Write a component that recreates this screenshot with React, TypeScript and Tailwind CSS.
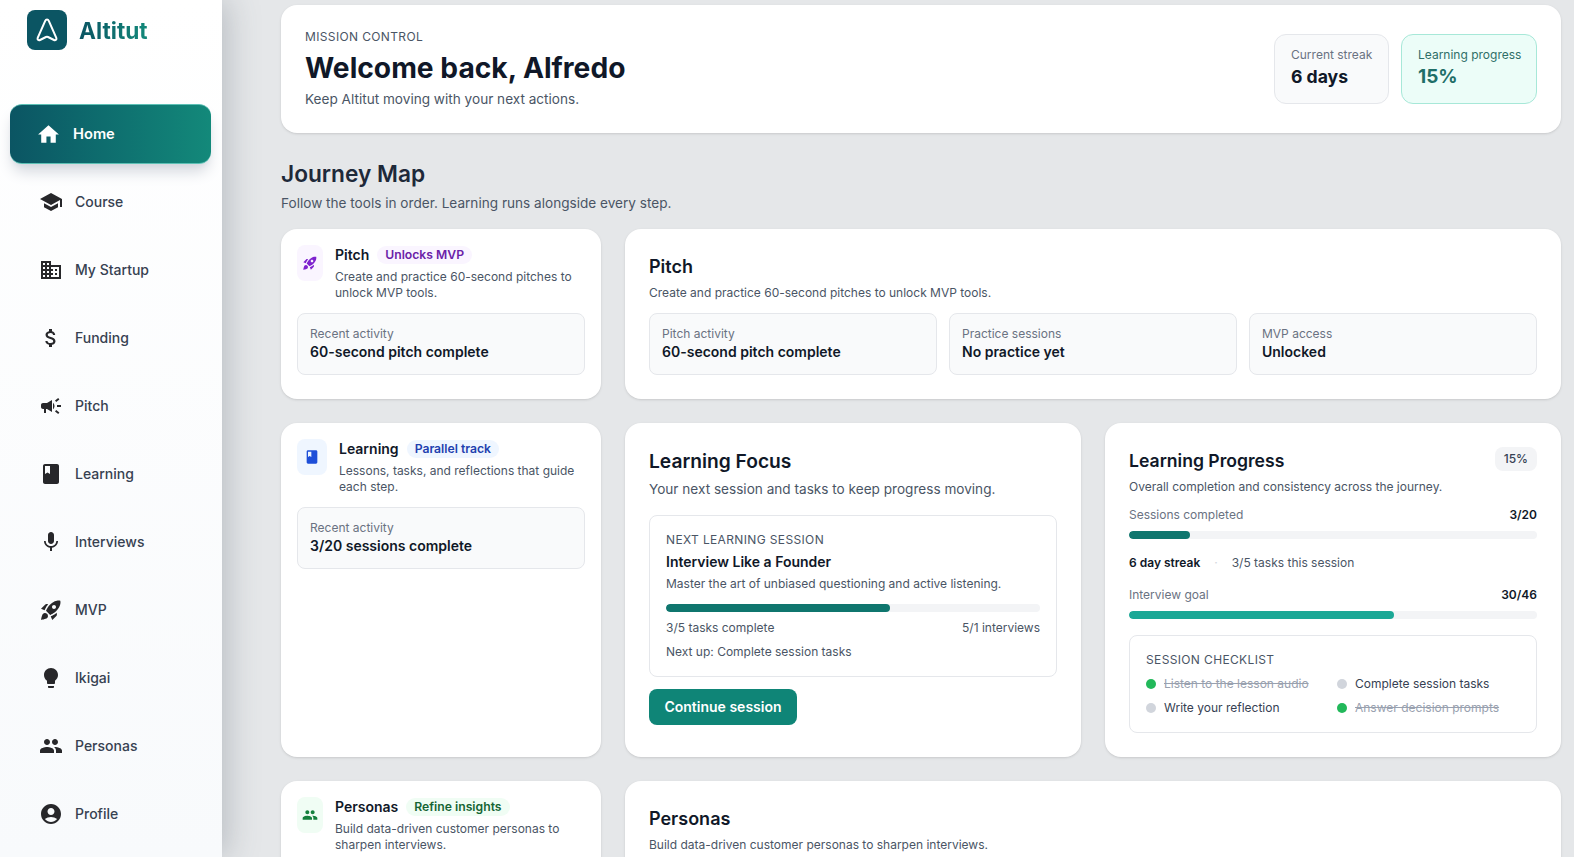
import React from 'react';
import {
  MdHome,
  MdSchool,
  MdDomain,
  MdAttachMoney,
  MdCampaign,
  MdBook,
  MdMic,
  MdRocketLaunch,
  MdLightbulb,
  MdPeople,
  MdAccountCircle,
} from 'react-icons/md';

const NAV_ITEMS = [
  { label: 'Course', icon: MdSchool },
  { label: 'My Startup', icon: MdDomain },
  { label: 'Funding', icon: MdAttachMoney },
  { label: 'Pitch', icon: MdCampaign },
  { label: 'Learning', icon: MdBook },
  { label: 'Interviews', icon: MdMic },
  { label: 'MVP', icon: MdRocketLaunch },
  { label: 'Ikigai', icon: MdLightbulb },
  { label: 'Personas', icon: MdPeople },
  { label: 'Profile', icon: MdAccountCircle },
];

const Sidebar: React.FC = () => (
  <aside className="relative z-10 w-[222px] shrink-0 h-full bg-linear-to-b from-white to-[#f8fafc] shadow-[6px_0_30px_rgba(75,85,99,0.28)] px-[10px] pt-[10px]">
    <div className="flex items-center gap-3 pl-[17px] h-10">
      <div className="w-10 h-10 rounded-lg bg-[#0b5563] flex items-center justify-center">
        <svg width="24" height="26" viewBox="0 0 24 26" fill="none" stroke="white" strokeWidth="2" strokeLinejoin="round">
          <path d="M12 2.5C12.8 2.5 13.4 3 13.8 3.9L21.3 20.8C22 22.4 20.5 23.8 19 23L13 20C12.3 19.7 11.7 19.7 11 20L5 23C3.5 23.8 2 22.4 2.7 20.8L10.2 3.9C10.6 3 11.2 2.5 12 2.5Z" />
        </svg>
      </div>
      <span className="pt-[3px] text-[22.7px] font-bold bg-linear-to-r from-[#0b5563] to-[#13897a] bg-clip-text text-transparent">Altitut</span>
    </div>
    <nav className="mt-[50px]">
      <div className="h-[68px] flex items-center">
        <div className="w-[201px] h-[60px] rounded-xl bg-linear-to-r from-[#0b5563] to-[#13897a] border-y border-[#5cc0b5] shadow-lg shadow-gray-300 flex items-center gap-3 pl-[26px] text-white">
          <MdHome size={25} />
          <span className="text-[14.7px] font-semibold">Home</span>
        </div>
      </div>
      {NAV_ITEMS.map(({ label, icon: Icon }) => (
        <div key={label} className="h-[68px] flex items-center gap-3 pl-[29px] text-[#374151]">
          <Icon size={24} className="text-[#27272a]" />
          <span className="text-sm font-medium">{label}</span>
        </div>
      ))}
    </nav>
  </aside>
);

const InfoBox: React.FC<{ label: string; value: string }> = ({ label, value }) => (
  <div className="rounded-lg border border-gray-200 bg-[#f9fafb] px-3 py-3">
    <p className="text-xs text-gray-500">{label}</p>
    <p className="text-sm font-semibold text-gray-900">{value}</p>
  </div>
);

const ToolCard: React.FC<{
  title: string;
  badge: string;
  badgeClass: string;
  description: string;
  tileClass: string;
  icon: React.ReactNode;
  children?: React.ReactNode;
}> = ({ title, badge, badgeClass, description, tileClass, icon, children }) => (
  <div className="rounded-2xl bg-white shadow-sm p-4">
    <div className="flex gap-3">
      <div className={`h-9 shrink-0 rounded-lg flex items-center justify-center ${tileClass}`}>{icon}</div>
      <div className="min-w-0">
        <div className="flex items-center gap-2 h-[20px]">
          <span className="text-sm font-semibold text-gray-900">{title}</span>
          <span className={`rounded-full px-2 h-[18px] leading-[18px] text-[12.2px] font-semibold ${badgeClass}`}>{badge}</span>
        </div>
        <p className="mt-1 text-xs leading-4 text-gray-600">{description}</p>
      </div>
    </div>
    {children && <div className="mt-3">{children}</div>}
  </div>
);

const ProgressBar: React.FC<{ percent: number; fillClass: string }> = ({ percent, fillClass }) => (
  <div className="h-2 rounded-full bg-gray-100 overflow-hidden">
    <div className={`h-full rounded-full ${fillClass}`} style={{ width: `${percent}%` }} />
  </div>
);

const CHECKLIST = [
  { label: 'Listen to the lesson audio', done: true },
  { label: 'Complete session tasks', done: false },
  { label: 'Write your reflection', done: false },
  { label: 'Answer decision prompts', done: true },
];

const App: React.FC = () => {
  return (
    <div className="flex h-screen overflow-hidden bg-[#e5e7e9] font-['Inter',sans-serif]">
      <Sidebar />
      <main className="flex-1 min-w-0 pl-[59px] pr-[13px] pt-[5px]">
        {/* Mission control header */}
        <section className="flex items-center justify-between rounded-2xl bg-white shadow-sm px-6 h-[128px]">
          <div>
            <p className="text-xs tracking-[0.03em] uppercase text-gray-600">Mission Control</p>
            <h1 className="text-[28.2px] leading-9 font-bold text-gray-900 mt-[5px]">Welcome back, Alfredo</h1>
            <p className="text-[13.6px] leading-5 text-gray-600 mt-[3px]">Keep Altitut moving with your next actions.</p>
          </div>
          <div className="flex gap-3">
            <div className="rounded-xl border border-gray-200 bg-[#f9fafb] px-4 py-3 w-[115px] whitespace-nowrap">
              <p className="text-xs text-gray-500">Current streak</p>
              <p className="text-[17.6px] leading-7 font-bold text-gray-900">6 days</p>
            </div>
            <div className="rounded-xl border border-[#a7e8d8] bg-[#ecfdf8] px-4 py-3 w-[136px] whitespace-nowrap">
              <p className="text-xs text-[#2f6f68]">Learning progress</p>
              <p className="text-[19px] leading-7 font-bold text-[#1f6f68]">15%</p>
            </div>
          </div>
        </section>

        <h2 className="mt-[25px] text-[22.7px] leading-8 font-semibold text-gray-800">Journey Map</h2>
        <p className="mt-[3px] text-[13.6px] leading-5 text-gray-600">Follow the tools in order. Learning runs alongside every step.</p>

        {/* Pitch row */}
        <div className="mt-4 grid grid-cols-[320px_1fr] gap-6">
          <ToolCard
            title="Pitch"
            badge="Unlocks MVP"
            badgeClass="bg-[#faf5ff] text-[#6b21a8]"
            description="Create and practice 60-second pitches to unlock MVP tools."
            tileClass="w-[26px] bg-[#faf5ff]"
            icon={<MdRocketLaunch size={16} className="text-[#7e22ce]" />}
          >
            <InfoBox label="Recent activity" value="60-second pitch complete" />
          </ToolCard>
          <div className="rounded-2xl bg-white shadow-sm p-6">
            <h3 className="text-lg font-semibold text-gray-900">Pitch</h3>
            <p className="mt-1 text-xs leading-4 text-gray-600">Create and practice 60-second pitches to unlock MVP tools.</p>
            <div className="mt-3 grid grid-cols-3 gap-3">
              <InfoBox label="Pitch activity" value="60-second pitch complete" />
              <InfoBox label="Practice sessions" value="No practice yet" />
              <InfoBox label="MVP access" value="Unlocked" />
            </div>
          </div>
        </div>

        {/* Learning row */}
        <div className="mt-6 grid grid-cols-[320px_1fr_1fr] gap-6">
          <ToolCard
            title="Learning"
            badge="Parallel track"
            badgeClass="bg-[#eff6ff] text-[#1e40af]"
            description="Lessons, tasks, and reflections that guide each step."
            tileClass="w-[30px] bg-[#eff6ff]"
            icon={<MdBook size={16} className="text-[#1d4ed8]" />}
          >
            <InfoBox label="Recent activity" value="3/20 sessions complete" />
          </ToolCard>

          <div className="rounded-2xl bg-white shadow-sm p-6">
            <h3 className="text-[19.2px] leading-7 font-semibold text-gray-900">Learning Focus</h3>
            <p className="mt-1 text-[13.6px] leading-5 text-gray-600">Your next session and tasks to keep progress moving.</p>
            <div className="mt-4 rounded-lg border border-gray-200 px-4 py-4">
              <p className="text-xs tracking-[0.03em] uppercase text-gray-600">Next learning session</p>
              <p className="mt-1 text-sm font-semibold text-gray-900">Interview Like a Founder</p>
              <p className="mt-1 text-xs leading-4 text-gray-600">Master the art of unbiased questioning and active listening.</p>
              <div className="mt-3">
                <ProgressBar percent={60} fillClass="bg-[#0f766e]" />
              </div>
              <div className="mt-2 flex justify-between text-xs text-gray-600">
                <span>3/5 tasks complete</span>
                <span>5/1 interviews</span>
              </div>
              <p className="mt-2 text-xs text-gray-600">Next up: Complete session tasks</p>
            </div>
            <button className="mt-3 h-9 w-[148px] rounded-lg bg-[#0f8577] text-sm font-semibold text-white">Continue session</button>
          </div>

          <div className="rounded-2xl bg-white shadow-sm p-6">
            <div className="flex items-start justify-between">
              <h3 className="text-[17.6px] leading-7 font-semibold text-gray-900">Learning Progress</h3>
              <span className="rounded-lg bg-gray-100 px-[9px] h-6 leading-6 text-xs font-medium text-gray-700">15%</span>
            </div>
            <p className="mt-1 text-xs leading-4 text-gray-600">Overall completion and consistency across the journey.</p>
            <div className="mt-3 flex justify-between text-xs">
              <span className="text-gray-500">Sessions completed</span>
              <span className="font-semibold text-gray-900">3/20</span>
            </div>
            <div className="mt-2">
              <ProgressBar percent={15} fillClass="bg-[#0f766e]" />
            </div>
            <div className="mt-4 flex items-center text-xs">
              <span className="font-semibold text-gray-900">6 day streak</span>
              <span className="mx-3.5 text-gray-300">·</span>
              <span className="text-gray-600">3/5 tasks this session</span>
            </div>
            <div className="mt-4 flex justify-between text-xs">
              <span className="text-gray-500">Interview goal</span>
              <span className="font-semibold text-gray-900">30/46</span>
            </div>
            <div className="mt-2">
              <ProgressBar percent={65} fillClass="bg-[#1ba896]" />
            </div>
            <div className="mt-4 rounded-lg border border-gray-200 px-4 py-4">
              <p className="text-xs tracking-[0.03em] uppercase text-gray-600">Session checklist</p>
              <div className="mt-2 grid grid-cols-2 gap-x-2 gap-y-2">
                {CHECKLIST.map(item => (
                  <div key={item.label} className="flex items-center gap-2 text-xs">
                    <span className={`h-2.5 w-2.5 rounded-full ${item.done ? 'bg-[#22b85a]' : 'bg-gray-300'}`}></span>
                    <span className={item.done ? 'text-gray-400 line-through' : 'text-gray-700'}>{item.label}</span>
                  </div>
                ))}
              </div>
            </div>
          </div>
        </div>

        {/* Personas row */}
        <div className="mt-6 grid grid-cols-[320px_1fr] gap-6">
          <ToolCard
            title="Personas"
            badge="Refine insights"
            badgeClass="bg-[#f0fdf4] text-[#166534]"
            description="Build data-driven customer personas to sharpen interviews."
            tileClass="w-[26px] bg-[#f0fdf4]"
            icon={<MdPeople size={16} className="text-[#15803d]" />}
          />
          <div className="rounded-2xl bg-white shadow-sm p-6">
            <h3 className="text-lg font-semibold text-gray-900">Personas</h3>
            <p className="mt-1 text-xs leading-4 text-gray-600">Build data-driven customer personas to sharpen interviews.</p>
          </div>
        </div>
      </main>
    </div>
  );
};

export default App;
